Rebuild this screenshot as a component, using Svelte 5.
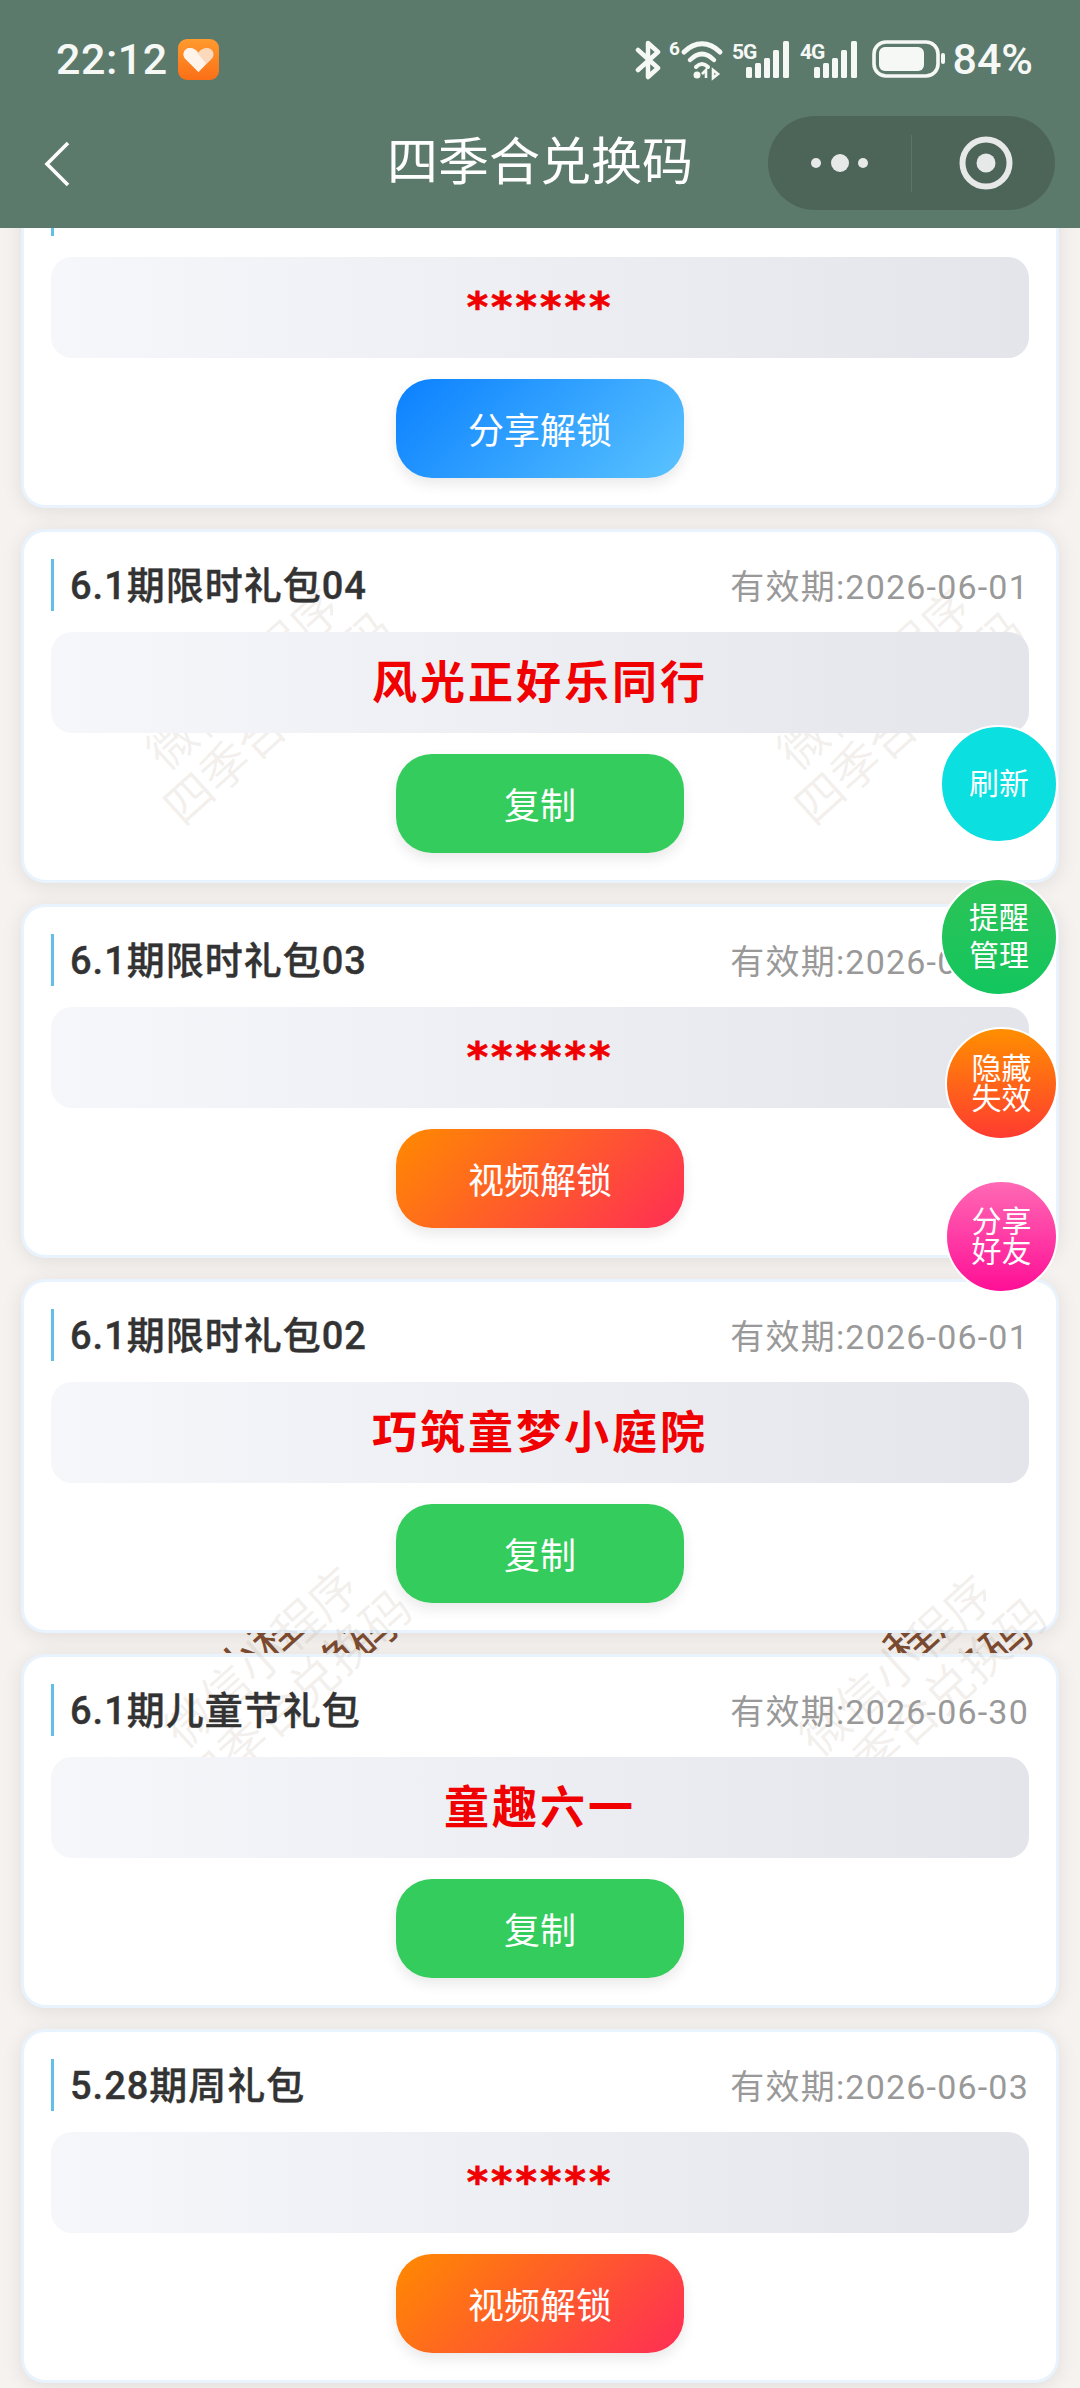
<script>
    // the first card is scrolled under the nav bar, its title row can't be seen
    const cards = [
        { title: "", date: "", code: "******", action: "分享解锁", kind: "blue" },
        { title: "6.1期限时礼包04", date: "2026-06-01", code: "风光正好乐同行", action: "复制", kind: "green" },
        { title: "6.1期限时礼包03", date: "2026-06-01", code: "******", action: "视频解锁", kind: "orange" },
        { title: "6.1期限时礼包02", date: "2026-06-01", code: "巧筑童梦小庭院", action: "复制", kind: "green" },
        { title: "6.1期儿童节礼包", date: "2026-06-30", code: "童趣六一", action: "复制", kind: "green" },
        { title: "5.28期周礼包", date: "2026-06-03", code: "******", action: "视频解锁", kind: "orange" },
    ];

    const floats = [
        { lines: ["刷新"], kind: "cyan" },
        { lines: ["提醒", "管理"], kind: "lime" },
        { lines: ["隐藏", "失效"], kind: "fire" },
        { lines: ["分享", "好友"], kind: "pink" },
    ];

    // watermark centres on the page
    const marks = [
        { x: 262, y: 700 },
        { x: 893, y: 700 },
        { x: 280, y: 1678 },
        { x: 915, y: 1686 },
    ];
    // the brown scraps showing in the gap between two cards
    const scraps = [
        { x: 262, y: 1678 },
        { x: 897, y: 1686 },
    ];
    const bandTop = 1633;
    const bars = [
        { x: 0, y: 26, h: 11 },
        { x: 9, y: 22, h: 15 },
        { x: 18, y: 17, h: 20 },
        { x: 27, y: 9, h: 28 },
        { x: 37, y: 0, h: 37 },
    ];
</script>

<div class="page">
    <header class="top">
        <div class="status">
            <span class="time">22:12</span>
            <svg class="health" width="41" height="41" viewBox="0 0 41 41">
                <defs>
                    <linearGradient id="hg" x1="0" y1="0" x2="0" y2="1">
                        <stop offset="0" stop-color="#ff9a2e" />
                        <stop offset="1" stop-color="#fb6f16" />
                    </linearGradient>
                </defs>
                <rect width="41" height="41" rx="9" fill="url(#hg)" />
                <path d="M20.5 33 L7 19.5 C3.5 15 6.5 9 12 9 C15.5 9 18.5 10.5 20.5 13.5 C22.5 10.5 25.5 9 29 9 C34.5 9 37.5 15 34 19.5 Z" fill="#fbd9bd" />
                <path d="M20.5 33 L7 19.5 C3.5 15 6.5 9 12 9 C14.5 9 16 10 17.5 11.5 L28 24.5 Z" fill="#fff3ea" />
            </svg>
            <span class="spacer"></span>
            <svg class="sys" width="320" height="44" viewBox="635 38 320 44">
                <path d="M638 50 L658 68 L648 77 L648 43 L658 52 L638 70" fill="none" stroke="#f6f8f6" stroke-width="4.5" stroke-linejoin="round" stroke-linecap="round" />
                <text class="tiny six" x="669" y="55">6</text>
                <path d="M684 52 C695 41 709 41 720 52" fill="none" stroke="#f6f8f6" stroke-width="5" stroke-linecap="round" />
                <path d="M690 60 C698 52 706 52 714 60" fill="none" stroke="#f6f8f6" stroke-width="4.5" stroke-linecap="round" />
                <path d="M696 67 C700 63 704 63 708 67" fill="none" stroke="#f6f8f6" stroke-width="4" stroke-linecap="round" />
                <circle cx="697" cy="75" r="3.5" fill="#f6f8f6" />
                <path d="M706 78 V70 L702 74 M713 70 V78 L718 74 Z" fill="none" stroke="#f6f8f6" stroke-width="2.6" />
                {#each [0, 68] as dx}
                    <text class="tiny" x={732 + dx} y="59">{dx ? "4G" : "5G"}</text>
                    {#each bars as b}
                        <rect x={746 + dx + b.x} y={41 + b.y} width="6" height={b.h} rx="1.5" fill="#f6f8f6" />
                    {/each}
                {/each}
            </svg>
            <svg class="battery" width="74" height="38" viewBox="0 0 74 38">
                <rect x="2" y="2" width="64" height="34" rx="12" fill="none" stroke="#f6f8f6" stroke-width="3.6" />
                <rect x="7" y="7" width="45" height="24" rx="6" fill="#f6f8f6" />
                <rect x="69" y="13" width="4" height="11" rx="2" fill="#f6f8f6" />
            </svg>
            <span class="pct">84%</span>
        </div>
        <nav class="bar">
            <svg class="back" width="26" height="46" viewBox="0 0 26 46">
                <path d="M24 2 L3 23 L24 44" fill="none" stroke="#fff" stroke-width="3.6" />
            </svg>
            <span class="name">四季合兑换码</span>
            <div class="capsule">
                <svg class="dots" width="143" height="94" viewBox="0 0 143 94">
                    <circle cx="48" cy="47" r="5" fill="#e6e9e7" />
                    <circle cx="72" cy="47" r="9" fill="#e6e9e7" />
                    <circle cx="95" cy="47" r="5" fill="#e6e9e7" />
                </svg>
                <span class="divider"></span>
                <svg class="target" width="143" height="94" viewBox="0 0 143 94">
                    <circle cx="74" cy="47" r="23.5" fill="none" stroke="#e6e9e7" stroke-width="6" />
                    <circle cx="74" cy="47" r="9.5" fill="#e6e9e7" />
                </svg>
            </div>
        </nav>
    </header>

    <main class="list">
        {#each cards as card}
            <section class="card">
                <div class="head">
                    <h2>{card.title}</h2>
                    {#if card.date}
                        <span class="date">有效期:{card.date}</span>
                    {/if}
                </div>
                <div class="code" class:masked={card.code === "******"}>{card.code}</div>
                <button class="action {card.kind}">{card.action}</button>
            </section>
        {/each}
    </main>

    {#each marks as m}
        <div class="mark" style="left:{m.x}px;top:{m.y}px">
            <span>微信小程序</span>
            <span>四季合兑换码</span>
        </div>
    {/each}

    <div class="band">
        {#each scraps as m}
            <div class="mark dark" style="left:{m.x}px;top:{m.y - bandTop}px">
                <span>微信小程序</span>
                <span>四季合兑换码</span>
            </div>
        {/each}
    </div>

    <aside class="floats">
        {#each floats as f}
            <button class="float {f.kind}">
                {#each f.lines as line}
                    <span>{line}</span>
                {/each}
            </button>
        {/each}
    </aside>
</div>

<style>
    :global(body) {
        margin: 0;
        background: #f6f2ef;
    }

    .page {
        position: relative;
        width: 1080px;
        height: 2388px;
        overflow: hidden;
        font-family: Roboto, "Noto Sans CJK SC", sans-serif;
        background: #f6f2ef;
    }

    .top {
        position: relative;
        z-index: 5;
        height: 228px;
        background: #5c7a6c;
    }

    .status {
        display: flex;
        align-items: center;
        height: 118px;
        padding: 0 47px 0 56px;
        box-sizing: border-box;
        color: #f6f8f6;
    }

    .time {
        font-size: 43px;
        font-weight: 500;
        letter-spacing: 0.5px;
    }

    .health {
        margin-left: 10px;
        margin-top: 1px;
    }

    .spacer {
        flex: 1;
    }

    .sys {
        margin-top: 1px;
    }

    .tiny {
        font-family: Roboto, sans-serif;
        font-size: 21px;
        font-weight: 700;
        fill: #f6f8f6;
        letter-spacing: -1px;
    }

    .six {
        font-size: 19px;
    }

    .battery {
        margin-left: -83px;
        margin-top: -1px;
    }

    .pct {
        margin-left: 6px;
        font-size: 43px;
        font-weight: 500;
    }

    .bar {
        display: grid;
        grid-template-columns: 1fr auto 1fr;
        align-items: center;
        height: 94px;
        margin-top: -2px;
        padding: 0 25px;
    }

    .back {
        margin: 2px 0 0 19px;
    }

    .name {
        font-size: 51px;
        color: #fff;
        line-height: 94px;
    }

    .capsule {
        justify-self: end;
        display: flex;
        align-items: center;
        width: 287px;
        height: 94px;
        border-radius: 47px;
        background: #4d6559;
    }

    .divider {
        width: 1px;
        height: 57px;
        background: #5c7568;
    }

    .list {
        display: flex;
        flex-direction: column;
        gap: 21px;
        margin-top: -74px;
        padding: 0 21px;
    }

    .card {
        display: flex;
        flex-direction: column;
        gap: 21px;
        padding: 27px;
        border: 3px solid #e8f3fd;
        border-radius: 24px;
        background: #fff;
        box-shadow: 0 3px 20px rgba(0, 0, 0, 0.09);
    }

    .head {
        position: relative;
        z-index: 2;
        display: flex;
        align-items: center;
        justify-content: space-between;
        height: 52px;
    }

    h2 {
        height: 50px;
        margin: 0;
        padding: 2px 0 0 16px;
        border-left: 3px solid #64bfe6;
        font-size: 38px;
        line-height: 50px;
        font-weight: 500;
        color: #333;
        letter-spacing: 1px;
        -webkit-text-stroke: 0.4px #333;
    }

    .date {
        padding-bottom: 2px;
        font-size: 34px;
        color: #999;
        letter-spacing: 1.2px;
    }

    .code {
        position: relative;
        z-index: 2;
        height: 101px;
        border-radius: 21px;
        background: linear-gradient(to right, #f6f7fb, #e3e5ea);
        color: #f00000;
        font-family: "Noto Sans CJK SC", sans-serif;
        font-size: 45px;
        font-weight: 700;
        line-height: 96px;
        letter-spacing: 3px;
        text-align: center;
    }

    .code.masked {
        font-family: "DejaVu Sans", sans-serif;
        font-size: 41px;
        line-height: 100px;
        letter-spacing: 3px;
        -webkit-text-stroke: 0.7px #f00000;
    }

    .action {
        position: relative;
        z-index: 2;
        align-self: center;
        width: 288px;
        height: 99px;
        padding: 0 0 2px;
        border: 0;
        border-radius: 36px;
        color: #fff;
        font-family: inherit;
        font-size: 36px;
        box-shadow: 0 6px 14px rgba(0, 0, 0, 0.09);
    }

    .green {
        background: #34cc5c;
    }

    .blue {
        background: linear-gradient(135deg, #0a80ff, #5ac3ff);
    }

    .orange {
        background: linear-gradient(135deg, #ff8a00, #ff2d55);
    }

    .mark {
        position: absolute;
        z-index: 1;
        display: flex;
        flex-direction: column;
        align-items: center;
        width: 400px;
        margin: -52px 0 0 -200px;
        transform: rotate(-42deg);
        font-size: 48px;
        line-height: 52px;
        color: rgba(120, 90, 60, 0.09);
    }

    .band {
        position: absolute;
        z-index: 1;
        left: 0;
        top: 1633px;
        width: 1080px;
        height: 20px;
        overflow: hidden;
    }

    .mark.dark {
        color: #7a4a30;
        line-height: 64px;
    }

    .floats {
        position: absolute;
        z-index: 4;
        top: 725px;
        right: 22px;
        display: flex;
        flex-direction: column;
        align-items: flex-end;
    }

    .float {
        display: flex;
        flex-direction: column;
        align-items: center;
        justify-content: center;
        width: 118px;
        height: 118px;
        padding: 0;
        border: 2px solid #fff;
        border-radius: 50%;
        color: #fff;
        font-family: inherit;
        font-size: 30px;
        line-height: 38px;
    }

    .cyan {
        background: #0bdfe0;
        margin-bottom: 35px;
    }

    .lime {
        background: linear-gradient(180deg, #2ec356, #12c65e);
        margin-bottom: 31px;
    }

    .fire {
        width: 113px;
        height: 113px;
        line-height: 30px;
        background: linear-gradient(180deg, #ff8f00, #ff3b30);
        margin-bottom: 40px;
    }

    .pink {
        width: 113px;
        height: 113px;
        line-height: 30px;
        background: linear-gradient(180deg, #ff69b4, #ff0f96);
    }
</style>
